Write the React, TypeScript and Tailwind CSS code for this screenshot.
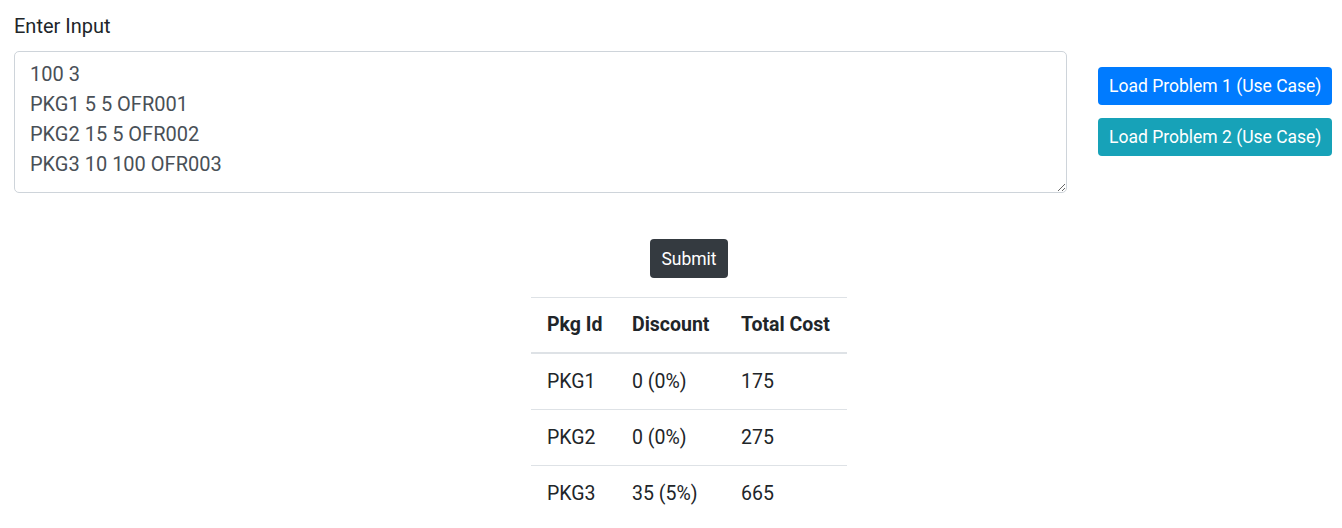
import React from "react";

const rows = [
  ["PKG1", "0 (0%)", "175"],
  ["PKG2", "0 (0%)", "275"],
  ["PKG3", "35 (5%)", "665"],
];

export default function App() {
  return (
    <div
      className="min-h-screen bg-white text-[#212529] pt-[11px] pl-[14px]"
      style={{ fontFamily: "Roboto, 'Liberation Sans', sans-serif" }}
    >
      <div className="flex items-start">
        <div className="w-[1053px] flex flex-col">
          <label className="text-[20px] leading-[30px] mb-[10px]">Enter Input</label>
          <textarea
            className="h-[142px] w-full border border-[#ced4da] rounded-[5px] px-[15px] py-[7px] text-[20px] leading-[30px] text-[#495057] outline-none"
            defaultValue={"100 3\nPKG1 5 5 OFR001\nPKG2 15 5 OFR002\nPKG3 10 100 OFR003"}
          />
        </div>
        <div className="ml-[31px] mt-[56px] flex flex-col gap-[13px]">
          <button className="h-[38px] px-[11px] rounded-[4px] bg-[#007bff] text-white text-[17.5px] leading-[26px] whitespace-nowrap">
            Load Problem 1 (Use Case)
          </button>
          <button className="h-[38px] px-[11px] rounded-[4px] bg-[#17a2b8] text-white text-[17.5px] leading-[26px] whitespace-nowrap">
            Load Problem 2 (Use Case)
          </button>
        </div>
      </div>
      <div className="flex flex-col items-center pl-[22px] mt-[46px]">
        <button className="h-[39px] px-[11px] rounded-[4px] bg-[#343a40] text-white text-[17.5px] leading-[26px]">
          Submit
        </button>
        <table className="mt-[19px] w-[316px] table-fixed border-collapse text-[19.5px] leading-[30px] whitespace-nowrap">
          <thead>
            <tr className="border-t border-[#dee2e6] border-b-2">
              <th className="w-[86px] text-left font-bold pl-[16px] pr-0 py-[12px]">Pkg Id</th>
              <th className="w-[109px] text-left font-bold pl-[15px] pr-0 py-[12px]">Discount</th>
              <th className="w-[121px] text-left font-bold pl-[15px] pr-0 py-[12px]">Total Cost</th>
            </tr>
          </thead>
          <tbody>
            {rows.map((r, i) => (
              <tr key={i} className={i > 0 ? "border-t border-[#dee2e6]" : ""}>
                <td className="pl-[16px] py-[12.5px]">{r[0]}</td>
                <td className="pl-[15px] py-[12.5px]">{r[1]}</td>
                <td className="pl-[15px] py-[12.5px]">{r[2]}</td>
              </tr>
            ))}
          </tbody>
        </table>
      </div>
    </div>
  );
}
